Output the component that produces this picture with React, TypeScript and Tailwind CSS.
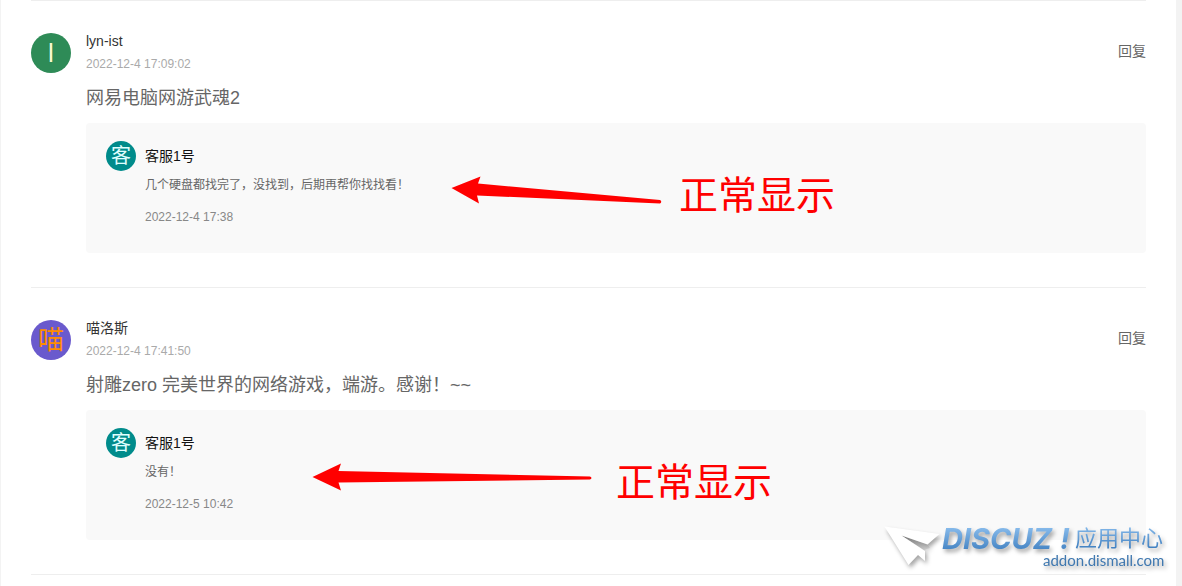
import clsx from "clsx";

type Reply = {
  author: string;
  text: string;
  date: string;
};

type Comment = {
  id: number;
  author: string;
  initial: string;
  avatarClass: string;
  date: string;
  text: string;
  reply: Reply;
  note: "near" | "far";
};

const comments: Comment[] = [
  {
    id: 1,
    author: "lyn-ist",
    initial: "l",
    avatarClass: "bg-[#2e8b57] text-[#fafad2]",
    date: "2022-12-4 17:09:02",
    text: "网易电脑网游武魂2",
    reply: {
      author: "客服1号",
      text: "几个硬盘都找完了，没找到，后期再帮你找找看！",
      date: "2022-12-4 17:38",
    },
    note: "far",
  },
  {
    id: 2,
    author: "喵洛斯",
    initial: "喵",
    avatarClass: "bg-[#6a5acd] text-[#ff8c00]",
    date: "2022-12-4 17:41:50",
    text: "射雕zero 完美世界的网络游戏，端游。感谢！~~",
    reply: {
      author: "客服1号",
      text: "没有！",
      date: "2022-12-5 10:42",
    },
    note: "near",
  },
];

// Red arrow and label laid over the reply box
function Note({ kind }: { kind: Comment["note"] }) {
  const far = kind === "far";
  return (
    <div
      className={clsx(
        "pointer-events-none absolute top-[52px] flex items-start text-[#ff0000]",
        far ? "left-[365px] gap-4" : "left-[226px] gap-6"
      )}
    >
      {far ? (
        <svg width="212" height="40" viewBox="0 0 212 40" fill="currentColor" aria-hidden="true">
          <path d="M0.5 13 L29.5 1.5 L27 8.5 L209 25 Q211.5 26.5 209 28.5 L26 20.5 L28 28.5 Z" />
        </svg>
      ) : (
        <svg width="280" height="40" viewBox="0 0 280 40" fill="currentColor" aria-hidden="true">
          <path d="M0.5 15 L29 1.5 L26.5 9 L278 14.5 Q281 16 278 17.5 L26.5 20.5 L29 28.5 Z" />
        </svg>
      )}
      <span className="text-[39px] leading-[42px] whitespace-nowrap">正常显示</span>
    </div>
  );
}

function ReplyBox({ reply, note }: { reply: Reply; note: Comment["note"] }) {
  return (
    <div className="relative mt-[13px] flex gap-[9px] rounded bg-[#f9f9f9] px-5 pt-[18px] pb-7">
      <div className="flex h-[30px] w-[30px] shrink-0 items-center justify-center rounded-full bg-[#008b8b] text-xl leading-none text-[#e0ffff]">
        客
      </div>
      <div className="min-w-0 flex-1">
        <h4 className="text-sm leading-[30px] text-[#111]">{reply.author}</h4>
        <p className="mt-1.5 text-xs leading-4 text-[#666]">{reply.text}</p>
        <time className="mt-4 block text-xs leading-4 text-[#888]">{reply.date}</time>
      </div>
      <Note kind={note} />
    </div>
  );
}

function CommentItem({ comment }: { comment: Comment }) {
  return (
    <li className="flex gap-[15px] border-b border-[#eee] pt-8 pb-[34px]">
      <div
        className={clsx(
          "flex h-10 w-10 shrink-0 items-center justify-center rounded-full text-[26px] leading-none",
          comment.avatarClass
        )}
      >
        {comment.initial}
      </div>
      <div className="min-w-0 flex-1">
        <div className="flex items-start justify-between">
          <div>
            <h3 className="text-sm leading-4 text-[#333]">{comment.author}</h3>
            <time className="mt-[7px] block text-xs leading-4 text-[#aaa]">{comment.date}</time>
          </div>
          <button type="button" className="text-sm leading-9 text-[#666]">
            回复
          </button>
        </div>
        <p className="mt-3.5 text-lg leading-6 text-[#666]">{comment.text}</p>
        <ReplyBox reply={comment.reply} note={comment.note} />
      </div>
    </li>
  );
}

function Watermark() {
  return (
    <svg
      className="pointer-events-none absolute right-3 bottom-3 drop-shadow-[2px_3px_2px_rgba(0,0,0,0.35)]"
      width="290"
      height="54"
      viewBox="0 0 290 54"
    >
      <defs>
        <linearGradient id="wm-blue" x1="0" y1="0" x2="0" y2="1">
          <stop offset="0.2" stopColor="#85b9ea" />
          <stop offset="0.9" stopColor="#3f7fc0" />
        </linearGradient>
        <linearGradient id="wm-fold" x1="0" y1="0" x2="1" y2="1">
          <stop offset="0" stopColor="#666" stopOpacity="0.8" />
          <stop offset="1" stopColor="#999" stopOpacity="0.2" />
        </linearGradient>
      </defs>
      <path d="M21.5 15.5 L47.5 24.5 L50 28 L44 30 Z" fill="url(#wm-fold)" />
      <path d="M4.5 6.5 L59.5 14 L47.5 24.5 L21.5 15.5 L45 31 L45 41 L38 35 L28.5 45 Z" fill="#fff" />
      <g fill="url(#wm-blue)">
        <text x="62" y="29" fontSize="29" fontWeight="700" fontStyle="italic" className="font-['Inter']">
          DISCUZ
        </text>
        <text x="180" y="29" fontSize="29" fontWeight="700" fontStyle="italic" className="font-['Inter']">
          !
        </text>
        <text x="195" y="26" fontSize="22" className="font-['Noto_Sans_CJK_SC']">
          应用中心
        </text>
      </g>
      <text x="163" y="46" fontSize="15" fill="#3f78b0" className="font-['Lato']">
        addon.dismall.com
      </text>
    </svg>
  );
}

export default function App() {
  return (
    <div className="relative min-h-screen bg-[#f3f3f3] pr-1.5 pl-px font-['Liberation_Sans','Noto_Sans_CJK_SC',sans-serif]">
      <main className="min-h-screen bg-white px-[30px]">
        <ul className="border-t border-[#eee]">
          {comments.map((c) => (
            <CommentItem key={c.id} comment={c} />
          ))}
        </ul>
      </main>
      <Watermark />
    </div>
  );
}
